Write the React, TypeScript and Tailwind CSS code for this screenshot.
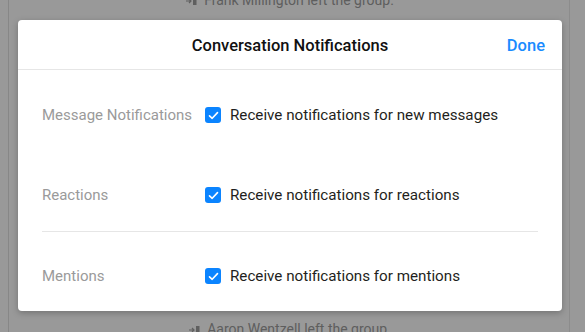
import React from "react";

function Check() {
  return (
    <span className="flex h-4 w-4 shrink-0 items-center justify-center rounded-[3px] bg-[#0b84ff]">
      <svg width="11" height="9" viewBox="0 0 11 9" fill="none">
        <path d="M1.5 4.8 L4.2 7.3 L9.5 1.6" stroke="white" strokeWidth="1.6" strokeLinecap="round" strokeLinejoin="round" />
      </svg>
    </span>
  );
}

function Row({ label, text }: { label: string; text: string }) {
  return (
    <div className="flex h-[22px] items-center">
      <div className="w-[163px] shrink-0 text-[15px] text-[#9a9a9a]">{label}</div>
      <Check />
      <div className="ml-[9px] text-[15.2px] text-[#1f1f21]">{text}</div>
    </div>
  );
}

function LeaveIcon() {
  return (
    <svg width="11" height="10" viewBox="0 0 11 10" fill="none">
      <path d="M0 5 H5 M3 3 L5 5 L3 7" stroke="#5f5f5f" strokeWidth="1.2" />
      <rect x="7" y="1" width="3.5" height="8" fill="#5f5f5f" />
    </svg>
  );
}

export default function App() {
  return (
    <div
      className="relative h-[332px] w-[585px] overflow-hidden bg-[#999999]"
      style={{ fontFamily: "Roboto, 'Noto Sans', sans-serif" }}
    >
      {/* background page */}
      <div className="flex h-full">
        <div className="w-[9px] shrink-0 border-r border-[#878787]" />
        <div className="flex flex-1 flex-col justify-between border-r border-[#8c8c8c]">
          <div className="-mt-[10px] flex items-center justify-center gap-[7px] pl-[2px] text-[14px] text-[#5e5e5e]">
            <LeaveIcon />
            <span>Frank Millington left the group.</span>
          </div>
          <div className="-mb-[8px] flex items-center justify-center gap-[7px] pl-[2px] text-[14px] text-[#5e5e5e]">
            <LeaveIcon />
            <span>Aaron Wentzell left the group.</span>
          </div>
        </div>
        <div className="w-[15px] shrink-0" />
      </div>

      {/* modal */}
      <div className="absolute left-[18px] top-[20px] h-[291px] w-[544px] rounded-[4px] bg-white shadow-[0_2px_6px_rgba(0,0,0,0.25)]">
        <div className="relative flex h-[50px] items-center justify-center border-b border-[#e6e6e6] pt-[4px]">
          <span className="text-[16.5px] font-medium text-[#111]">Conversation Notifications</span>
          <span className="absolute right-[17px] text-[16.5px] font-medium text-[#1a8bff]">Done</span>
        </div>
        <div className="px-[24px] pt-[34px]">
          <Row label="Message Notifications" text="Receive notifications for new messages" />
          <div className="mt-[58px]">
            <Row label="Reactions" text="Receive notifications for reactions" />
          </div>
          <div className="mt-[25px] border-t border-[#e6e6e6]" />
          <div className="mt-[33px]">
            <Row label="Mentions" text="Receive notifications for mentions" />
          </div>
        </div>
      </div>
    </div>
  );
}
